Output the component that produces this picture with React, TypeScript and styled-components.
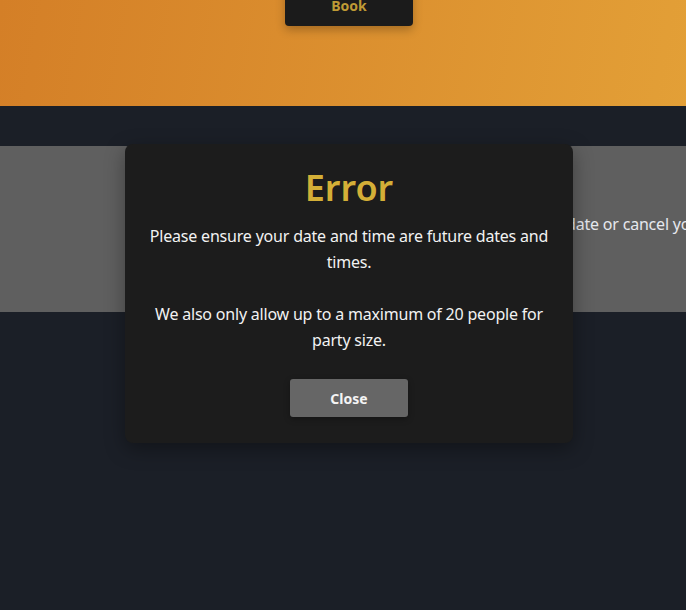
import React, { FC } from "react";
import styled, { createGlobalStyle } from "styled-components";

const GlobalStyle = createGlobalStyle`
  html, body {
    margin: 0;
    padding: 0;
    background: #1b1f27;
    font-family: "Noto Sans", "Open Sans", sans-serif;
    overflow: hidden;
  }
`;

// page is a bit wider than the window (centre sits at 349px)
const Page = styled.div`
  width: 698px;
  height: 610px;
  display: flex;
  flex-direction: column;
  background: #1b1f27;
  position: relative;
`;

const Header = styled.header`
  height: 106px;
  background: linear-gradient(100deg, #d47f27 0%, #e3a037 100%);
  display: flex;
  justify-content: center;
  align-items: flex-start;
`;

const BookButton = styled.button`
  margin-top: -16px;
  width: 128px;
  height: 42px;
  border: none;
  border-radius: 4px;
  background: #1b1b1b;
  color: #bf9a35;
  font-family: inherit;
  font-weight: 700;
  font-size: 14px;
  box-shadow: 0 4px 10px rgba(0, 0, 0, 0.25);
`;

const Band = styled.section`
  margin-top: 40px;
  height: 166px;
  background: #5f5f5f;
  display: flex;
  align-items: center;
  white-space: nowrap;
  overflow: hidden;
`;

const BandText = styled.p`
  margin: 0;
  padding-left: 286px;
  padding-bottom: 11px;
  color: #e6e8ee;
  font-size: 16px;
  letter-spacing: -0.2px;
`;

const Overlay = styled.div`
  position: absolute;
  inset: 0;
  display: flex;
  justify-content: center;
  align-items: flex-start;
  padding-top: 144px;
`;

const Modal = styled.div`
  width: 448px;
  box-sizing: border-box;
  padding: 22px 16px 26px;
  background: #1c1c1c;
  border-radius: 8px;
  box-shadow: 0 6px 20px rgba(0, 0, 0, 0.35);
  display: flex;
  flex-direction: column;
  align-items: center;
  text-align: center;
`;

const Title = styled.h2`
  margin: 0 0 13px;
  color: #d4af37;
  font-size: 36px;
  font-weight: 600;
  line-height: 44px;
`;

const Message = styled.p`
  margin: 0 0 26px;
  color: #f2f2f2;
  font-size: 16px;
  line-height: 26px;
  letter-spacing: -0.2px;
  max-width: 400px;
`;

const CloseButton = styled.button`
  width: 118px;
  height: 38px;
  border: none;
  border-radius: 3px;
  background: #666666;
  color: #f4f4f4;
  font-family: inherit;
  font-weight: 700;
  font-size: 14px;
  box-shadow: 0 2px 6px rgba(0, 0, 0, 0.3);
`;

const App: FC = () => {
  return (
    <Page>
      <GlobalStyle />
      <Header>
        <BookButton>Book</BookButton>
      </Header>
      <Band>
        <BandText>You already have a booking, please update or cancel your booking first.</BandText>
      </Band>
      <Overlay>
        <Modal>
          <Title>Error</Title>
          <Message>Please ensure your date and time are future dates and times.</Message>
          <Message>We also only allow up to a maximum of 20 people for party size.</Message>
          <CloseButton>Close</CloseButton>
        </Modal>
      </Overlay>
    </Page>
  );
};

export default App;
